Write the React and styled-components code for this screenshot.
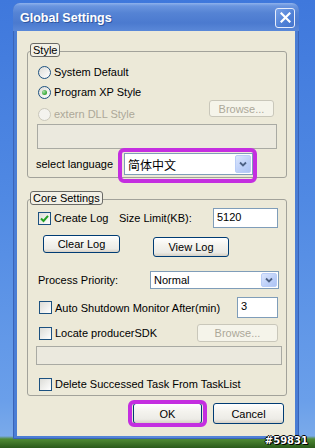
import React from 'react';
import styled, { createGlobalStyle, css } from 'styled-components';

const GlobalStyle = createGlobalStyle`
  html, body { margin: 0; padding: 0; }
  body {
    width: 315px; height: 448px; overflow: hidden;
    font-family: "Liberation Sans", Arial, sans-serif;
    font-size: 11px; color: #000;
  }
  * { box-sizing: border-box; }
`;

const Desktop = styled.div`
  position: relative;
  width: 315px; height: 448px;
  padding: 3px 0 0 13px;
  background: linear-gradient(to bottom, #3f78dc 0px, #5089e3 200px, #6a9fea 400px, #7aaaea 436px, #4f8a34 439px, #2a5a1a 448px);
`;

const Watermark = styled.div`
  position: absolute;
  right: 7px; bottom: 2px;
  font-family: "DejaVu Sans", sans-serif;
  font-weight: bold;
  font-size: 10px;
  color: #fff;
  text-shadow: 1px 1px 0 #000, -1px 0 0 #000, 0 -1px 0 #000, 1px 0 0 #000;
`;

const Window = styled.div`
  width: 286px; height: 436px;
  display: flex; flex-direction: column;
  border-radius: 7px 7px 0 0;
  background: linear-gradient(to right, #4a7dd4, #5a8ad9 50%, #4a7dd4);
  box-shadow: inset 0 0 0 1px #3a64b8;
`;

const TitleBar = styled.div`
  height: 28px;
  flex: none;
  display: flex; align-items: center; justify-content: space-between;
  padding: 0 4px 0 7px;
  border-radius: 7px 7px 0 0;
  background: linear-gradient(to bottom, #8fb2ec 0px, #6a95df 3px, #5583d4 10px, #4b7acf 20px, #5a88d8 28px);
`;

const Title = styled.span`
  font-family: "Liberation Sans", Arial, sans-serif;
  font-weight: bold; font-size: 12.5px;
  color: #fff;
  text-shadow: 1px 1px 0 #2f569f;
  margin-top: 1px;
`;

const CloseBtn = styled.div`
  width: 20px; height: 20px;
  border: 1px solid #e8eefb;
  border-radius: 3px;
  background: linear-gradient(135deg, #7aa3e8, #4f80d6 60%, #4575cd);
  display: flex; align-items: center; justify-content: center;
  margin-top: 1px;
`;

const Client = styled.div`
  flex: 1;
  margin: 0 4px 3px;
  background: #ece9d8;
  padding: 20px 8px 0 10px;
  display: flex; flex-direction: column;
`;

const Group = styled.div`
  position: relative;
  height: ${p => p.$h}px;
  margin-top: ${p => p.$mt || 0}px;
  border: 1px solid #a2a29a;
  border-radius: 3px;
  display: flex; flex-direction: column;
`;

const Legend = styled.span`
  position: absolute;
  left: 2px; top: -9px;
  height: 14px;
  padding: 0 2px;
  line-height: 12px;
  border: 1px solid #6a6a66;
  border-radius: 3px;
  background: #f2f0e6;
  font-size: 11px;
`;

const Row = styled.div`
  display: flex;
  align-items: ${p => p.$align || 'center'};
  height: ${p => p.$h}px;
  margin-top: ${p => p.$mt || 0}px;
  padding-left: ${p => p.$pl || 0}px;
  padding-right: ${p => p.$pr || 0}px;
  justify-content: ${p => p.$justify || 'flex-start'};
`;

const Choice = styled.label`
  display: flex; align-items: center;
  gap: 3px;
  height: 16px;
  width: ${p => (p.$w ? `${p.$w}px` : 'auto')};
  color: ${p => (p.$disabled ? '#aca899' : '#000')};
  white-space: nowrap;
`;

const RadioDot = styled.span`
  width: 13px; height: 13px; flex: none;
  border-radius: 50%;
  border: 1px solid ${p => (p.$disabled ? '#cac8bb' : '#1c5180')};
  background: ${p => (p.$disabled ? '#f4f3ee' : 'linear-gradient(135deg, #dcdcd7, #ffffff)')};
  display: flex; align-items: center; justify-content: center;
  &::after {
    content: '';
    display: ${p => (p.$checked ? 'block' : 'none')};
    width: 5px; height: 5px; border-radius: 50%;
    background: radial-gradient(circle at 35% 35%, #a8e0a8, #3fae3f 60%, #2a8a2a);
  }
`;

const CheckBox = styled.span`
  width: 13px; height: 13px; flex: none;
  border: 1px solid #1c5180;
  background: linear-gradient(135deg, #dcdcd7, #ffffff);
  display: flex; align-items: center; justify-content: center;
`;

const Text = styled.span`
  display: flex; align-items: center;
  width: ${p => (p.$w ? `${p.$w}px` : 'auto')};
  padding-left: ${p => p.$pl || 0}px;
  white-space: nowrap;
`;

const Button = styled.div`
  width: ${p => p.$w}px; height: ${p => p.$h}px;
  flex: none;
  align-self: ${p => p.$self || 'center'};
  margin-left: ${p => (p.$auto ? 'auto' : `${p.$ml || 0}px`)};
  margin-right: ${p => p.$mr || 0}px;
  position: relative;
  display: flex; align-items: center; justify-content: center;
  border-radius: 3px;
  white-space: nowrap;
  ${p => (p.$disabled
    ? css`
      border: 1px solid #c9c7ba;
      background: #f5f4ea;
      color: #aca899;
    `
    : css`
      border: 1px solid #003c74;
      background: linear-gradient(to bottom, #ffffff 0%, #f4f3ee 40%, #ecebe6 80%, #d6d0c5 100%);
      color: #000;
    `)}
`;

const TextBox = styled.div`
  width: ${p => p.$w}px; height: ${p => p.$h}px;
  flex: none;
  margin-left: ${p => (p.$auto ? 'auto' : `${p.$ml || 0}px`)};
  margin-right: ${p => p.$mr || 0}px;
  border: 1px solid #7f9db9;
  background: #fff;
  padding: 2px 3px;
  line-height: 13px;
`;

const Field = styled.div`
  width: ${p => p.$w}px; height: ${p => p.$h}px;
  margin-top: ${p => p.$mt || 0}px;
  margin-left: ${p => p.$ml || 0}px;
  border: 1px solid #a9aaa3;
  background: #ebe9de;
`;

const ComboWrap = styled.div`
  position: relative;
  width: ${p => p.$w}px; height: ${p => p.$h}px;
  flex: none;
`;

const Combo = styled.div`
  width: 100%; height: 100%;
  border: 1px solid #7f9db9;
  background: #fff;
  display: flex; align-items: center;
  padding: 1px 1px 1px 3px;
  font-family: ${p => (p.$cjk ? '"Noto Sans CJK SC", sans-serif' : 'inherit')};
  font-size: ${p => (p.$cjk ? '12px' : '11px')};
`;

const ComboValue = styled.span`
  flex: 1;
`;

const DropButton = styled.span`
  width: 16px; align-self: stretch;
  border: 1px solid #b9cdf7;
  border-radius: 2px;
  background: linear-gradient(135deg, #dbe6fd, #bccff8 60%, #aec4f4);
  display: flex; align-items: center; justify-content: center;
`;

const Highlight = styled.div`
  position: absolute;
  top: ${p => p.$t}px; right: ${p => p.$r}px; bottom: ${p => p.$b}px; left: ${p => p.$l}px;
  border: 4px solid #c42ee0;
  border-radius: 6px;
  pointer-events: none;
`;

const Chevron = () => (
  <svg width="8" height="6" viewBox="0 0 8 6">
    <path d="M1 1.5 L4 4.5 L7 1.5" fill="none" stroke="#4d6185" strokeWidth="1.8" />
  </svg>
);

const Check = () => (
  <svg width="9" height="9" viewBox="0 0 9 9">
    <path d="M1 4.5 L3.5 7 L8 1.8" fill="none" stroke="#21a121" strokeWidth="2" />
  </svg>
);

const CloseX = () => (
  <svg width="11" height="11" viewBox="0 0 11 11">
    <path d="M1.5 1.5 L9.5 9.5 M9.5 1.5 L1.5 9.5" stroke="#fff" strokeWidth="2.2" strokeLinecap="square" />
  </svg>
);

const Radio = ({ label, checked, disabled, w }) => (
  <Choice $disabled={disabled} $w={w}>
    <RadioDot $checked={checked} $disabled={disabled} />
    {label}
  </Choice>
);

const Checkbox = ({ label, checked, w }) => (
  <Choice $w={w}>
    <CheckBox>{checked && <Check />}</CheckBox>
    {label}
  </Choice>
);

const Select = ({ value, w, h, cjk, children }) => (
  <ComboWrap $w={w} $h={h}>
    <Combo $cjk={cjk}>
      <ComboValue>{value}</ComboValue>
      <DropButton><Chevron /></DropButton>
    </Combo>
    {children}
  </ComboWrap>
);

export default function App() {
  return (
    <>
      <GlobalStyle />
      <Desktop>
        <Window>
          <TitleBar>
            <Title>Global Settings</Title>
            <CloseBtn><CloseX /></CloseBtn>
          </TitleBar>
          <Client>
            <Group $h={127}>
              <Legend>Style</Legend>
              <Row $h={16} $mt={12} $pl={10}>
                <Radio label="System Default" />
              </Row>
              <Row $h={16} $mt={4} $pl={10}>
                <Radio label="Program XP Style" checked />
              </Row>
              <Row $h={22} $pl={10} $align="flex-end">
                <Radio label="extern DLL Style" disabled />
                <Button $w={65} $h={17} $self="flex-start" $auto $mr={12} $disabled>Browse...</Button>
              </Row>
              <Field $w={240} $h={25} $mt={2} $ml={9} />
              <Row $h={22} $mt={4}>
                <Text $w={96} $pl={8}>select language</Text>
                <Select value="简体中文" w={129} h={22} cjk>
                  <Highlight $t={-5} $r={-4} $b={-8} $l={-6} />
                </Select>
              </Row>
            </Group>

            <Group $h={197} $mt={21}>
              <Legend>Core Settings</Legend>
              <Row $h={20} $mt={8} $pl={10}>
                <Checkbox label="Create Log" checked w={81} />
                <Text $w={94}>Size Limit(KB):</Text>
                <TextBox $w={65} $h={20}>5120</TextBox>
              </Row>
              <Row $h={22} $mt={7}>
                <Button $w={77} $h={18} $self="flex-start" $ml={15}>Clear Log</Button>
                <Button $w={76} $h={20} $self="flex-end" $ml={33}>View Log</Button>
              </Row>
              <Row $h={18} $mt={14}>
                <Text $w={122} $pl={10}>Process Priority:</Text>
                <Select value="Normal" w={129} h={18} />
              </Row>
              <Row $h={21} $mt={8} $pl={11}>
                <Checkbox label="Auto Shutdown Monitor After(min)" />
                <TextBox $w={41} $h={21} $auto $mr={8}>3</TextBox>
              </Row>
              <Row $h={18} $mt={6} $pl={11}>
                <Checkbox label="Locate producerSDK" />
                <Button $w={81} $h={18} $auto $mr={8} $disabled>Browse...</Button>
              </Row>
              <Field $w={246} $h={19} $mt={4} $ml={8} />
              <Row $h={14} $mt={12} $pl={11}>
                <Checkbox label="Delete Successed Task From TaskList" />
              </Row>
            </Group>

            <Row $h={21} $mt={7} $justify="flex-end" $pr={3}>
              <Button $w={69} $h={21}>
                OK
                <Highlight $t={-4} $r={-6} $b={-4} $l={-6} />
              </Button>
              <Button $w={71} $h={21} $ml={11}>Cancel</Button>
            </Row>
          </Client>
        </Window>
        <Watermark>#59831</Watermark>
      </Desktop>
    </>
  );
}
